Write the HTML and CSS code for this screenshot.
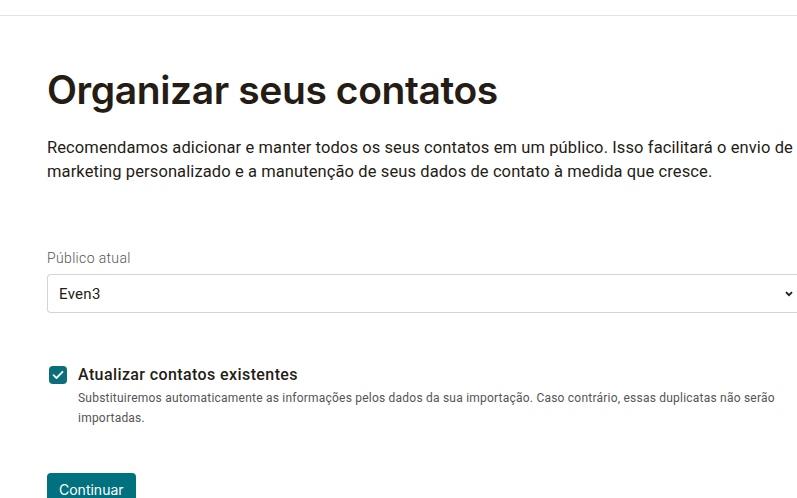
FILE: index.html
```html
<!DOCTYPE html>
<html lang="pt-BR">
<head>
<meta charset="utf-8">
<link rel="stylesheet" href="styles.css">
</head>
<body>
<div class="topbar"></div>
<main class="content">
  <h1 class="title">Organizar seus contatos</h1>
  <p class="intro">Recomendamos adicionar e manter todos os seus contatos em um público. Isso facilitará o envio de marketing personalizado e a manutenção de seus dados de contato à medida que cresce.</p>
  <div class="field">
    <label class="label">Público atual</label>
    <div class="select">
      <span>Even3</span>
      <svg class="chev" width="8" height="6" viewBox="0 0 8 6"><path d="M1 1.2 L4 4.2 L7 1.2" fill="none" stroke="#241c15" stroke-width="1.8"/></svg>
    </div>
  </div>
  <div class="check-row">
    <span class="checkbox"><svg width="12" height="10" viewBox="0 0 12 10"><path d="M1.5 5.2 L4.5 8 L10.5 1.8" fill="none" stroke="#fff" stroke-width="1.8" stroke-linecap="round" stroke-linejoin="round"/></svg></span>
    <div class="check-text">
      <div class="check-label">Atualizar contatos existentes</div>
      <div class="check-desc">Substituiremos automaticamente as informações pelos dados da sua importação. Caso contrário, essas duplicatas não serão importadas.</div>
    </div>
  </div>
  <button class="btn">Continuar</button>
</main>
</body>
</html>
```
FILE: styles.css
```css
html, body { margin: 0; padding: 0; background: #fff; overflow: hidden; }
body { width: 797px; height: 498px; font-family: Roboto, "Liberation Sans", sans-serif; color: #241c15; }
.topbar { height: 15px; border-bottom: 1px solid #e4e4e4; }
.content { padding: 0 0 0 47px; width: 750px; }
.title { margin: 48px 0 0; font-family: Inter, "Liberation Sans", sans-serif; font-weight: 600; font-size: 39px; line-height: 52px; letter-spacing: -0.4px; color: #241c15; }
.intro { margin: 20px 0 0; font-size: 16.5px; line-height: 24px; width: 760px; letter-spacing: 0.1px; }
.field { margin-top: 64px; }
.label { display: block; font-size: 14px; line-height: 20px; color: #555; font-weight: 300; letter-spacing: 0.35px; }
.select { margin-top: 6px; border: 1px solid #d4d4d4; border-right: none; border-radius: 4px 0 0 4px; display: flex; align-items: center; justify-content: space-between; padding: 0 0 0 11px; font-size: 15px; letter-spacing: 0.3px; box-sizing: border-box; width: 750px; height: 39px; }
.chev { margin-right: 4px; }
.check-row { display: flex; gap: 11px; margin-top: 52px; margin-left: 2px; }
.checkbox { flex: none; width: 18px; height: 18px; border-radius: 4px; background: #0a6e7b; display: flex; align-items: center; justify-content: center; margin-top: 1px; }
.check-label { font-size: 16px; line-height: 20px; font-weight: 500; letter-spacing: 0.4px; }
.check-desc { margin-top: 3px; font-size: 12px; line-height: 20px; color: #555; width: 710px; letter-spacing: 0.22px; }
.btn { margin-top: 45px; background: #00717f; color: #fff; border: none; border-radius: 4px; font-family: Inter, "Liberation Sans", sans-serif; font-size: 14px; height: 32px; padding: 0 12px; }
```
